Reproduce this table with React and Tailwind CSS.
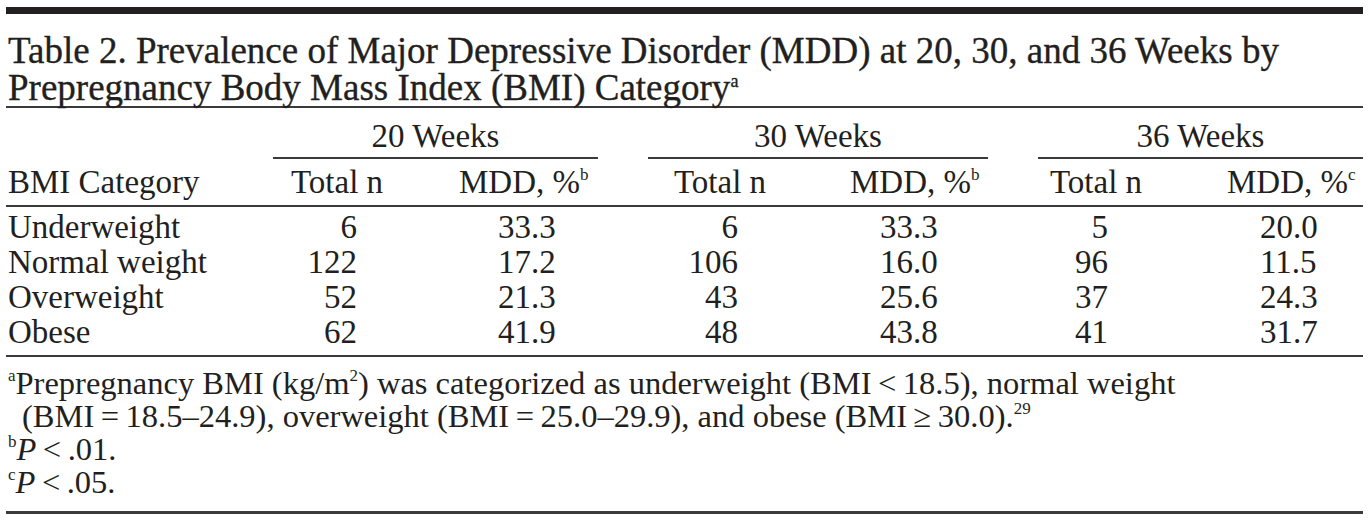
import React from 'react';

const ROWS = [
  ['Underweight', '6', '33.3', '6', '33.3', '5', '20.0'],
  ['Normal weight', '122', '17.2', '106', '16.0', '96', '11.5'],
  ['Overweight', '52', '21.3', '43', '25.6', '37', '24.3'],
  ['Obese', '62', '41.9', '48', '43.8', '41', '31.7'],
];

const GRID = 'grid grid-cols-[267px_147px_178px_50px_152px_188px_50px_147px_178px]';

// padding for number cells, per data column
const NUM = [
  'text-right pr-[63px]',
  'pl-[78px]',
  'text-right pr-[62px]',
  'pl-[80px]',
  'text-right pr-[77px]',
  'pl-[75px]',
];

function Sup({ children }) {
  return <sup className="text-[17px] top-[-0.75em]">{children}</sup>;
}

function GroupHead({ children }) {
  return (
    <div className="col-span-2 text-center pt-[13px] pb-[6px] leading-[30px] border-b-2 border-[#3a3a3a]">
      {children}
    </div>
  );
}

export default function App() {
  return (
    <div className="w-[1369px] h-[522px] bg-white px-[6px] pt-[7px] text-[#231f20] font-['Liberation_Serif',serif] overflow-hidden">
      <div className="h-[7px] bg-[#231f20]" />

      {/* title */}
      <h1 className="pt-[18px] pl-[2px] text-[37px] leading-[37px] [-webkit-text-stroke:0.35px_#231f20]">
        Table 2. Prevalence of Major Depressive Disorder (MDD) at 20, 30, and 36 Weeks by
        <br />
        Prepregnancy Body Mass Index (BMI) Category
        <sup className="text-[18px] top-[-0.75em]">a</sup>
      </h1>
      <div className="h-[2px] bg-[#3a3a3a]" />

      {/* column headers */}
      <div className={`${GRID} text-[33px]`}>
        <div />
        <GroupHead>20 Weeks</GroupHead>
        <div />
        <GroupHead>30 Weeks</GroupHead>
        <div />
        <GroupHead>36 Weeks</GroupHead>

        <div className="pl-[2px] leading-[46px]">BMI Category</div>
        <div className="pl-[18px] leading-[46px]">Total n</div>
        <div className="pl-[39px] leading-[46px]">MDD, %<Sup>b</Sup></div>
        <div />
        <div className="pl-[26px] leading-[46px]">Total n</div>
        <div className="pl-[50px] leading-[46px]">MDD, %<Sup>b</Sup></div>
        <div />
        <div className="pl-[12px] leading-[46px]">Total n</div>
        <div className="pl-[42px] leading-[46px]">MDD, %<Sup>c</Sup></div>
      </div>
      <div className="h-[2px] bg-[#3a3a3a]" />

      {/* body */}
      <div className={`${GRID} text-[33px] leading-[35px] pt-[3px] pb-[5px]`}>
        {ROWS.map((r) => (
          <React.Fragment key={r[0]}>
            <div className="pl-[2px]">{r[0]}</div>
            <div className={NUM[0]}>{r[1]}</div>
            <div className={NUM[1]}>{r[2]}</div>
            <div />
            <div className={NUM[2]}>{r[3]}</div>
            <div className={NUM[3]}>{r[4]}</div>
            <div />
            <div className={NUM[4]}>{r[5]}</div>
            <div className={NUM[5]}>{r[6]}</div>
          </React.Fragment>
        ))}
      </div>
      <div className="h-[2px] bg-[#3a3a3a]" />

      {/* footnotes */}
      <div className="pt-[10px] pb-[12px] text-[32.5px] leading-[33px]">
        <p className="pl-[16px] -indent-[14px]">
          <Sup>a</Sup>Prepregnancy BMI (kg/m<Sup>2</Sup>) was categorized as underweight (BMI&#8201;&lt;&#8201;18.5), normal weight
          <br />
          (BMI&#8201;=&#8201;18.5–24.9), overweight (BMI&#8201;=&#8201;25.0–29.9), and obese (BMI&#8201;≥&#8201;30.0).<Sup>29</Sup>
        </p>
        <p className="pl-[2px]">
          <Sup>b</Sup><i>P</i>&#8201;&lt;&#8201;.01.
        </p>
        <p className="pl-[2px]">
          <Sup>c</Sup><i>P</i>&#8201;&lt;&#8201;.05.
        </p>
      </div>
      <div className="h-[3px] bg-[#3a3a3a]" />
    </div>
  );
}
